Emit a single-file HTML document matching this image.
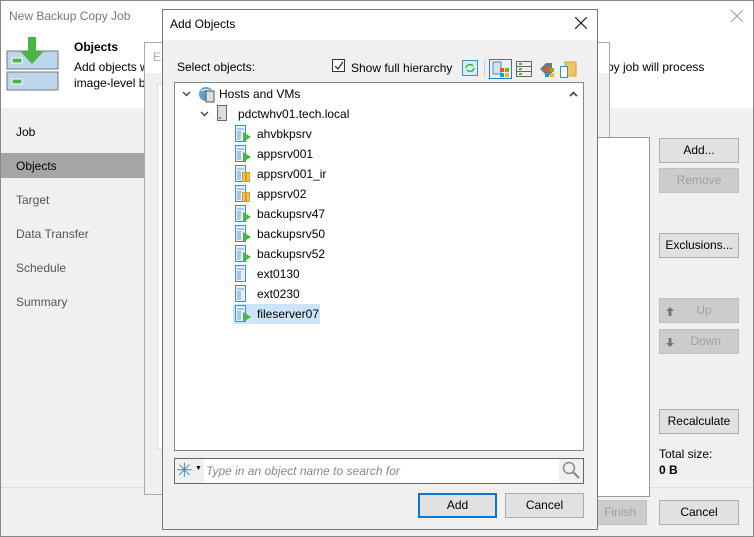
<!DOCTYPE html>
<html><head><meta charset="utf-8"><style>
*{box-sizing:border-box;margin:0;padding:0}
body{width:754px;height:537px;position:relative;overflow:hidden;font-family:"Liberation Sans",sans-serif;font-size:12px;color:#000;background:#f0f0f0}
.a{position:absolute}
.btn{position:absolute;background:#e1e1e1;border:1px solid #adadad;text-align:center;line-height:22px;font-size:12px}
.dis{color:#a0a0a0;background:#cccccc;border-color:#bfbfbf}
.nav{position:absolute;left:16px;font-size:12px}
.it{position:absolute;height:18px;line-height:18px;font-size:12px}
</style></head><body>
<div class="a" style="left:0;top:0;width:754px;height:537px;border:1px solid #888"></div>
<div class="a" style="left:1px;top:1px;width:752px;height:107px;background:#fff"></div>
<div class="a" style="left:9px;top:9px;color:#777;font-size:12px">New Backup Copy Job</div>
<svg class="a" style="left:731px;top:10px" width="12" height="12"><path d="M0 0L12 12M12 0L0 12" stroke="#999" stroke-width="1"/></svg>
<svg class="a" style="left:6px;top:35px" width="54" height="56"><rect x="1" y="16" width="51" height="18" fill="#bcd6ee" stroke="#777"/><rect x="1" y="37" width="51" height="18" fill="#bcd6ee" stroke="#777"/><rect x="6" y="23" width="10" height="5" fill="#4bb543" stroke="#fff"/><rect x="6" y="44" width="10" height="5" fill="#4bb543" stroke="#fff"/><path d="M22 2h8v14h8l-12 13-12-13h8z" fill="#4bb543"/></svg>
<div class="a" style="left:74px;top:40px;font-weight:bold">Objects</div>
<div class="a" style="left:74px;top:60px;width:80px;white-space:nowrap;overflow:hidden">Add objects w</div>
<div class="a" style="left:74px;top:76px;width:71px;white-space:nowrap;overflow:hidden">image-level b</div>
<div class="a" style="left:607px;top:60px">py job will process</div>
<div class="nav" style="top:125px">Job</div>
<div class="a" style="left:1px;top:153px;width:144px;height:25px;background:#a5a5a5"></div>
<div class="nav" style="top:159px">Objects</div>
<div class="nav" style="top:193px;color:#555">Target</div>
<div class="nav" style="top:227px;color:#555">Data Transfer</div>
<div class="nav" style="top:261px;color:#555">Schedule</div>
<div class="nav" style="top:295px;color:#555">Summary</div>
<div class="a" style="left:1px;top:487px;width:752px;height:1px;background:#ddd"></div>
<!-- middle dialog -->
<div class="a" style="left:144px;top:42px;width:466px;height:453px;background:#f0f0f0;border:1px solid #aaa"></div>
<div class="a" style="left:145px;top:43px;width:464px;height:30px;background:#fff"></div>
<div class="a" style="left:153px;top:50px;color:#aaa">Ex</div>
<div class="a" style="left:157px;top:84px;width:10px;height:365px;background:#fff;border:1px solid #ddd"></div>
<div class="a" style="left:590px;top:137px;width:60px;height:360px;background:#fff;border:1px solid #999"></div>
<!-- right buttons -->
<div class="btn" style="left:659px;top:138px;width:80px;height:25px">Add...</div>
<div class="btn dis" style="left:659px;top:168px;width:80px;height:25px">Remove</div>
<div class="btn" style="left:659px;top:233px;width:80px;height:25px">Exclusions...</div>
<div class="btn dis" style="left:659px;top:298px;width:80px;height:25px">&nbsp;&nbsp;&nbsp;Up<svg class="a" style="left:6px;top:8px" width="8" height="9"><path d="M4 0L8 4H5.5V9h-3V4H0z" fill="#777"/></svg></div>
<div class="btn dis" style="left:659px;top:329px;width:80px;height:25px">&nbsp;&nbsp;&nbsp;&nbsp;Down<svg class="a" style="left:6px;top:8px" width="8" height="9"><path d="M4 9L8 5H5.5V0h-3V5H0z" fill="#777"/></svg></div>
<div class="btn" style="left:659px;top:409px;width:80px;height:25px">Recalculate</div>
<div class="a" style="left:659px;top:447px">Total size:</div>
<div class="a" style="left:659px;top:463px;font-weight:bold">0 B</div>
<div class="btn dis" style="left:590px;top:500px;width:57px;height:25px">&nbsp;Finish</div>
<div class="btn" style="left:659px;top:500px;width:80px;height:25px">Cancel</div>
<!-- add objects dialog -->
<div class="a" style="left:162px;top:9px;width:436px;height:521px;background:#f0f0f0;border:1px solid #777"></div>
<div class="a" style="left:163px;top:10px;width:434px;height:30px;background:#fff"></div>
<div class="a" style="left:170px;top:17px;font-size:12px">Add Objects</div>
<svg class="a" style="left:575px;top:17px" width="12" height="12"><path d="M0 0L12 12M12 0L0 12" stroke="#222" stroke-width="1.2"/></svg>
<div class="a" style="left:177px;top:60px">Select objects:</div>
<div class="a" style="left:332px;top:59px;width:13px;height:13px;border:1px solid #333;background:#fff"><svg class="a" style="left:1px;top:1px" width="10" height="10"><path d="M1 5l3 3 5-7" stroke="#222" fill="none" stroke-width="1.2"/></svg></div>
<div class="a" style="left:351px;top:61px">Show full hierarchy</div>
<svg class="a" style="left:462px;top:59px" width="120" height="20">
<rect x="0.5" y="1.5" width="15" height="15" fill="#d8ebf7" stroke="#3b8ed0"/><path d="M4 9a4 4 0 0 1 7-2M12 9a4 4 0 0 1-7 2" stroke="#4bb543" stroke-width="1.6" fill="none"/>
<line x1="22.5" y1="1" x2="22.5" y2="18" stroke="#ccc"/>
<rect x="27.5" y="0.5" width="22" height="19" fill="none" stroke="#1e7ad2"/><rect x="31" y="3" width="8" height="12" fill="#cfe2f3" stroke="#3b8ed0"/><rect x="38" y="9" width="4" height="4" fill="#f25022"/><rect x="43" y="9" width="4" height="4" fill="#7fba00"/><rect x="38" y="14" width="4" height="4" fill="#00a4ef"/><rect x="43" y="14" width="4" height="4" fill="#ffb900"/>
<rect x="54.5" y="2.5" width="15" height="15" fill="#eee" stroke="#666"/><line x1="55" y1="7.5" x2="69" y2="7.5" stroke="#666"/><line x1="55" y1="12.5" x2="69" y2="12.5" stroke="#666"/><rect x="57" y="4" width="3" height="2" fill="#4bb543"/><rect x="57" y="9" width="3" height="2" fill="#4bb543"/><rect x="57" y="14" width="3" height="2" fill="#4bb543"/>
<path d="M78 10l6-6h6v12h-6z" fill="#777"/><rect x="83" y="9" width="4" height="4" fill="#f25022"/><rect x="88" y="9" width="4" height="4" fill="#7fba00"/><rect x="83" y="14" width="4" height="4" fill="#00a4ef"/><rect x="88" y="14" width="4" height="4" fill="#ffb900"/>
<rect x="103" y="3" width="11" height="14" fill="#f3c363" stroke="#d99c27"/><rect x="98.5" y="7.5" width="7" height="11" fill="#fff" stroke="#3b8ed0"/>
</svg>
<div class="a" style="left:174px;top:82px;width:410px;height:369px;background:#fff;border:1px solid #828790"></div>
<svg class="a" style="left:569px;top:91px" width="9" height="6"><path d="M1 5l3.5-3.5L8 5" stroke="#444" stroke-width="1.6" fill="none"/></svg>
<svg class="a" style="left:182px;top:91px" width="9" height="6"><path d="M1 1l3.5 3.5L8 1" stroke="#444" stroke-width="1.4" fill="none"/></svg>
<svg class="a" style="left:198px;top:85px" width="18" height="18"><circle cx="8" cy="9" r="7" fill="#5a9fd6"/><path d="M3 6q5-3 10 0" stroke="#fff" fill="none"/><rect x="8" y="6" width="8" height="11" fill="#ddd" stroke="#555"/></svg>
<div class="it" style="left:219px;top:85px">Hosts and VMs</div>
<svg class="a" style="left:200px;top:111px" width="9" height="6"><path d="M1 1l3.5 3.5L8 1" stroke="#444" stroke-width="1.4" fill="none"/></svg>
<svg class="a" style="left:216px;top:105px" width="12" height="16"><rect x="1.5" y="0.5" width="9" height="15" fill="#ddd" stroke="#666"/><rect x="3" y="12" width="2" height="2" fill="#4bb543"/></svg>
<div class="it" style="left:238px;top:105px">pdctwhv01.tech.local</div>
<div class="a" style="left:233px;top:304px;width:87px;height:20px;background:#cce4f7"></div>
<svg class="a" style="left:234px;top:125px" width="18" height="200">
<defs><g id="v"><rect x="1.5" y="0.5" width="10" height="16" fill="#e6f0fa" stroke="#3b8ed0"/><rect x="3" y="3" width="7" height="2" fill="#a9c8e8"/><rect x="3" y="6" width="4" height="9" fill="#a9c8e8"/></g>
<path id="g" d="M9 7l8 5-8 5z" fill="#4bb543"/><g id="o"><rect x="8.5" y="7.5" width="3" height="9" fill="#f3c363" stroke="#d99c27"/><rect x="12.5" y="7.5" width="3" height="9" fill="#f3c363" stroke="#d99c27"/></g></defs>
<use href="#v"/><use href="#g"/>
<use href="#v" y="20"/><use href="#g" y="20"/>
<use href="#v" y="40"/><use href="#o" y="40"/>
<use href="#v" y="60"/><use href="#o" y="60"/>
<use href="#v" y="80"/><use href="#g" y="80"/>
<use href="#v" y="100"/><use href="#g" y="100"/>
<use href="#v" y="120"/><use href="#g" y="120"/>
<use href="#v" y="140"/>
<use href="#v" y="160"/>
<use href="#v" y="180"/><use href="#g" y="180"/>
</svg>
<div class="it" style="left:257px;top:125px">ahvbkpsrv</div>
<div class="it" style="left:257px;top:145px">appsrv001</div>
<div class="it" style="left:257px;top:165px">appsrv001_ir</div>
<div class="it" style="left:257px;top:185px">appsrv02</div>
<div class="it" style="left:257px;top:205px">backupsrv47</div>
<div class="it" style="left:257px;top:225px">backupsrv50</div>
<div class="it" style="left:257px;top:245px">backupsrv52</div>
<div class="it" style="left:257px;top:265px">ext0130</div>
<div class="it" style="left:257px;top:285px">ext0230</div>
<div class="it" style="left:257px;top:305px">fileserver07</div>
<div class="a" style="left:174px;top:458px;width:410px;height:26px;background:#fff;border:1px solid #666"></div>
<div class="a" style="left:175px;top:459px;width:29px;height:24px;background:#f0f0f0"></div>
<div class="a" style="left:176px;top:459px;color:#3b8ed0;font-size:20px;line-height:24px">✳</div>
<div class="a" style="left:195px;top:465px;font-size:7px">▼</div>
<div class="a" style="left:206px;top:464px;color:#888;font-style:italic">Type in an object name to search for</div>
<div class="a" style="left:559px;top:459px;width:24px;height:24px;background:#f0f0f0"></div>
<svg class="a" style="left:562px;top:461px" width="18" height="18"><circle cx="7" cy="7" r="5.5" fill="none" stroke="#888" stroke-width="1.5"/><line x1="11" y1="11" x2="17" y2="17" stroke="#888" stroke-width="2"/></svg>
<div class="btn" style="left:418px;top:493px;width:79px;height:25px;border:2px solid #0078d7;line-height:21px">Add</div>
<div class="btn" style="left:505px;top:493px;width:79px;height:25px">Cancel</div>
</body></html>
